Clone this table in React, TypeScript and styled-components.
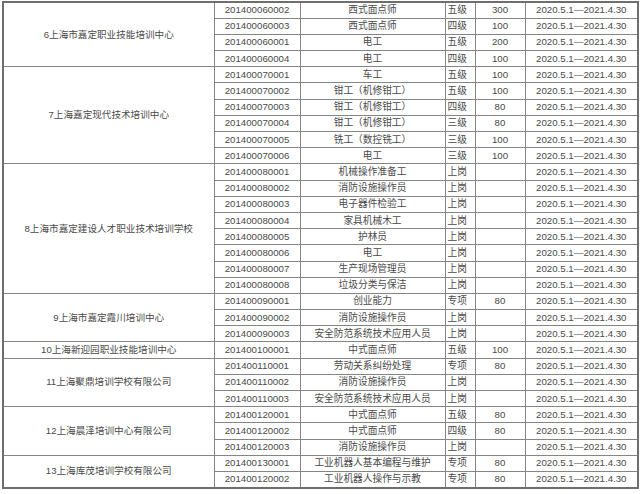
import { Fragment } from 'react'
import styled, { createGlobalStyle } from 'styled-components'

const GlobalStyle = createGlobalStyle`
	html, body {
		margin: 0;
		padding: 0;
		background: #fff;
	}
`

const Wrapper = styled.section`
	width: 640px;
	height: 494px;
	box-sizing: border-box;
	padding: 1px 3px 0 2px;
	overflow: hidden;
	background: #fff;
`

const Table = styled.table`
	width: 635px;
	table-layout: fixed;
	border-collapse: collapse;
	border: 2px solid #6e6e6e;
	font-family: "Liberation Sans", "Noto Sans CJK SC", sans-serif;
	font-size: 9.7px;
	color: #4a4a4a;
`

const Col = styled.col<{ $w: number }>`
	width: ${props => props.$w}px;
`

const Row = styled.tr`
	height: 16.2px;
`

const Cell = styled.td<{ $left?: boolean }>`
	border: 1px solid #858585;
	padding: 0 0 0 ${props => props.$left ? '2px' : '0'};
	text-align: ${props => props.$left ? 'left' : 'center'};
	vertical-align: middle;
	white-space: nowrap;
	line-height: 14px;
	overflow: hidden;
`

const OrgCell = styled(Cell)`
	font-size: 9.6px;
`

type Item = [string, string, string, string]

interface Org {
	name: string
	items: Item[]
}

const DATE = '2020.5.1—2021.4.30'

const widths = [211, 86, 145, 30, 50, 113]

const orgs: Org[] = [
	{
		name: '6上海市嘉定职业技能培训中心',
		items: [
			['201400060002', '西式面点师', '五级', '300'],
			['201400060003', '西式面点师', '四级', '100'],
			['201400060001', '电工', '五级', '200'],
			['201400060004', '电工', '四级', '100'],
		],
	},
	{
		name: '7上海嘉定现代技术培训中心',
		items: [
			['201400070001', '车工', '五级', '100'],
			['201400070002', '钳工（机修钳工）', '五级', '100'],
			['201400070003', '钳工（机修钳工）', '四级', '80'],
			['201400070004', '钳工（机修钳工）', '三级', '80'],
			['201400070005', '铣工（数控铣工）', '三级', '100'],
			['201400070006', '电工', '三级', '100'],
		],
	},
	{
		name: '8上海市嘉定建设人才职业技术培训学校',
		items: [
			['201400080001', '机械操作准备工', '上岗', ''],
			['201400080002', '消防设施操作员', '上岗', ''],
			['201400080003', '电子器件检验工', '上岗', ''],
			['201400080004', '家具机械木工', '上岗', ''],
			['201400080005', '护林员', '上岗', ''],
			['201400080006', '电工', '上岗', ''],
			['201400080007', '生产现场管理员', '上岗', ''],
			['201400080008', '垃圾分类与保洁', '上岗', ''],
		],
	},
	{
		name: '9上海市嘉定霞川培训中心',
		items: [
			['201400090001', '创业能力', '专项', '80'],
			['201400090002', '消防设施操作员', '上岗', ''],
			['201400090003', '安全防范系统技术应用人员', '上岗', ''],
		],
	},
	{
		name: '10上海新迎园职业技能培训中心',
		items: [['201400100001', '中式面点师', '五级', '100']],
	},
	{
		name: '11上海聚鼎培训学校有限公司',
		items: [
			['201400110001', '劳动关系纠纷处理', '专项', '80'],
			['201400110002', '消防设施操作员', '上岗', ''],
			['201400110003', '安全防范系统技术应用人员', '上岗', ''],
		],
	},
	{
		name: '12上海晨泽培训中心有限公司',
		items: [
			['201400120001', '中式面点师', '五级', '80'],
			['201400120002', '中式面点师', '四级', '80'],
			['201400120003', '消防设施操作员', '上岗', ''],
		],
	},
	{
		name: '13上海库茂培训学校有限公司',
		items: [
			['201400130001', '工业机器人基本编程与维护', '专项', '80'],
			['201400120002', '工业机器人操作与示教', '专项', '80'],
		],
	},
]

const App = () => {
	return (
		<Fragment>
			<GlobalStyle />
			<Wrapper>
				<Table>
					<colgroup>
						{widths.map((w, i) => <Col key={i} $w={w} />)}
					</colgroup>
					<tbody>
						{orgs.map(org =>
							org.items.map((item, i) => (
								<Row key={item[0] + org.name + i}>
									{i === 0 && <OrgCell rowSpan={org.items.length}>{org.name}</OrgCell>}
									<Cell>{item[0]}</Cell>
									<Cell>{item[1]}</Cell>
									<Cell $left>{item[2]}</Cell>
									<Cell>{item[3]}</Cell>
									<Cell>{DATE}</Cell>
								</Row>
							))
						)}
					</tbody>
				</Table>
			</Wrapper>
		</Fragment>
	)
}

export default App
